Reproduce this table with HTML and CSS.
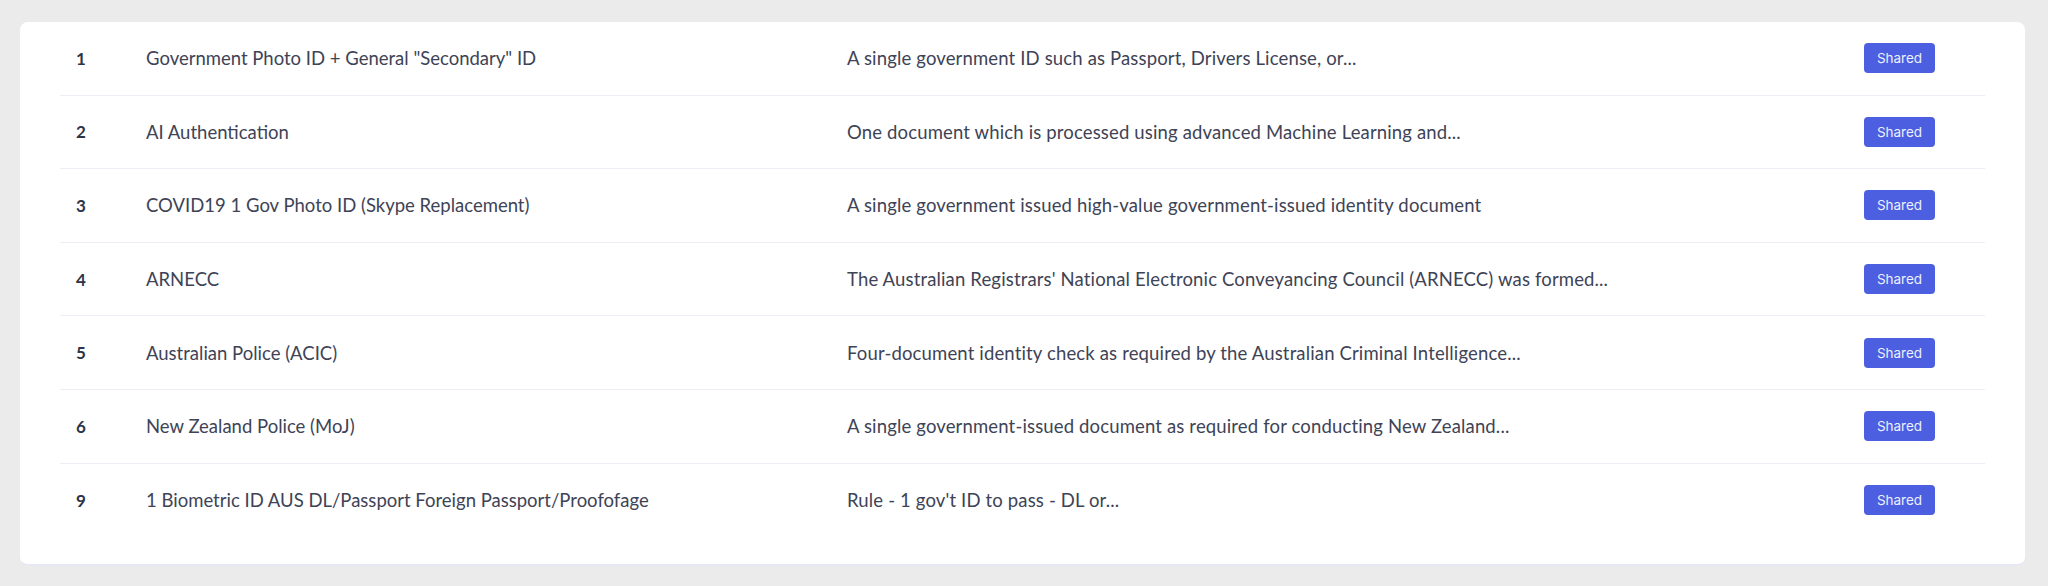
FILE: index.html
```html
<!DOCTYPE html>
<html>
<head>
<meta charset="utf-8">
<link rel="stylesheet" href="styles.css">
</head>
<body>
<div class="page">
  <div class="card">
    <div class="table">
      <div class="row">
        <div class="num">1</div>
        <div class="name">Government Photo ID + General "Secondary" ID</div>
        <div class="desc">A single government ID such as Passport, Drivers License, or...</div>
        <div class="act"><span class="badge">Shared</span></div>
      </div>
      <div class="row">
        <div class="num">2</div>
        <div class="name">AI Authentication</div>
        <div class="desc">One document which is processed using advanced Machine Learning and...</div>
        <div class="act"><span class="badge">Shared</span></div>
      </div>
      <div class="row">
        <div class="num">3</div>
        <div class="name">COVID19 1 Gov Photo ID (Skype Replacement)</div>
        <div class="desc">A single government issued high-value government-issued identity document</div>
        <div class="act"><span class="badge">Shared</span></div>
      </div>
      <div class="row">
        <div class="num">4</div>
        <div class="name">ARNECC</div>
        <div class="desc">The Australian Registrars' National Electronic Conveyancing Council (ARNECC) was formed...</div>
        <div class="act"><span class="badge">Shared</span></div>
      </div>
      <div class="row">
        <div class="num">5</div>
        <div class="name">Australian Police (ACIC)</div>
        <div class="desc">Four-document identity check as required by the Australian Criminal Intelligence...</div>
        <div class="act"><span class="badge">Shared</span></div>
      </div>
      <div class="row">
        <div class="num">6</div>
        <div class="name">New Zealand Police (MoJ)</div>
        <div class="desc">A single government-issued document as required for conducting New Zealand...</div>
        <div class="act"><span class="badge">Shared</span></div>
      </div>
      <div class="row last">
        <div class="num">9</div>
        <div class="name">1 Biometric ID AUS DL/Passport Foreign Passport/Proofofage</div>
        <div class="desc">Rule - 1 gov't ID to pass - DL or...</div>
        <div class="act"><span class="badge">Shared</span></div>
      </div>
    </div>
  </div>
</div>
</body>
</html>
```
FILE: styles.css
```css
* { box-sizing: border-box; }
html, body {
  margin: 0;
  padding: 0;
  background: #ebebeb;
  font-family: "Lato", "Noto Sans", sans-serif;
}
.page {
  padding: 22px 23px 0 20px;
}
.card {
  background: #ffffff;
  border-radius: 8px;
  border-bottom: 2px solid #e6e8f5;
  padding: 0 40px 27px 40px;
}
.table {
  display: flex;
  flex-direction: column;
}
.row {
  display: grid;
  grid-template-columns: 70px 701px 1fr 137px;
  align-items: center;
  height: 73.6px;
  border-bottom: 1px solid #eceef5;
}
.row.last {
  border-bottom: none;
}
.row > div {
  padding: 0 16px;
}
.num {
  font-weight: 700;
  font-size: 17px;
  color: #2e3447;
}
.name, .desc {
  font-size: 18.5px;
  font-weight: 400;
  color: #3e4356;
  white-space: nowrap;
}
.desc {
  letter-spacing: 0.15px;
}
.act {
  display: flex;
}
.badge {
  display: inline-block;
  background: #4b5fe0;
  color: #eef0ff;
  font-family: "Inter", "Lato", sans-serif;
  font-size: 13.5px;
  font-weight: 400;
  line-height: 30px;
  height: 30px;
  width: 71px;
  text-align: center;
  border-radius: 4px;
}
```
